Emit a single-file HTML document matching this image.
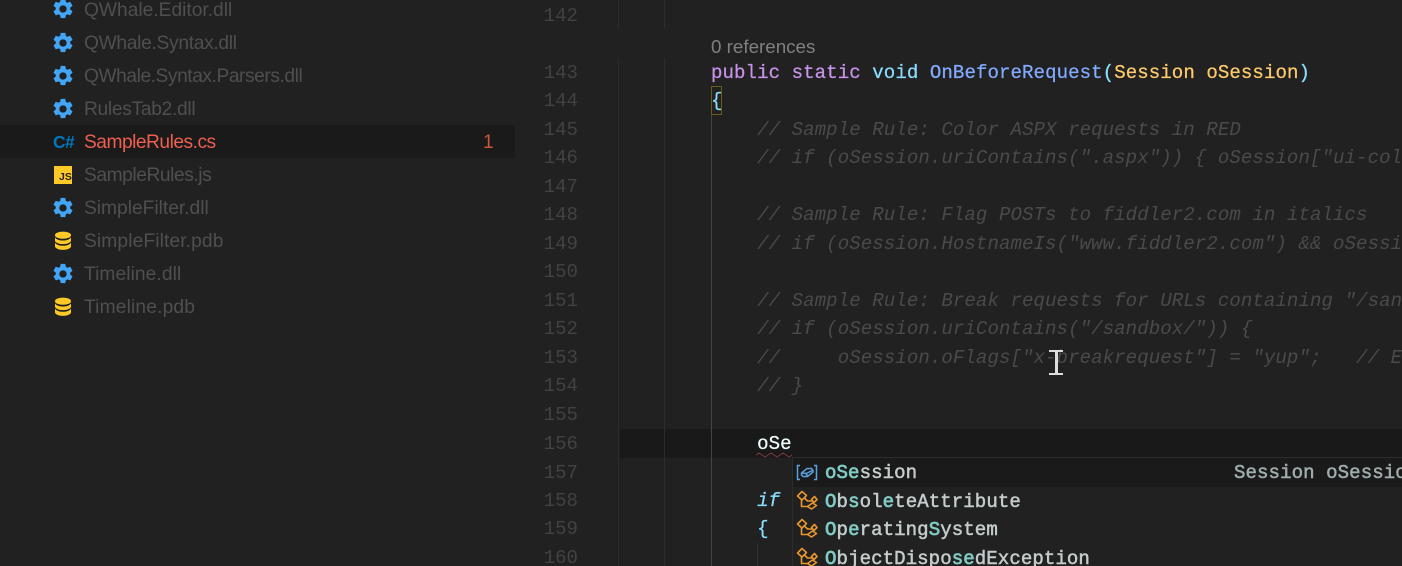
<!DOCTYPE html>
<html>
<head>
<meta charset="utf-8">
<style>
html,body{margin:0;padding:0;background:#212121;}
#r{position:relative;width:1402px;height:566px;overflow:hidden;background:#212121;}
.a{position:absolute;}
.f{position:absolute;left:84px;height:33px;font:19.2px/33px "Liberation Sans",sans-serif;color:#4f4f4f;white-space:pre;}
.ic{position:absolute;}
.n,.c,.s{font-family:"Liberation Mono",monospace;font-size:19.08px;white-space:pre;position:absolute;height:28px;line-height:28px;letter-spacing:.07px;}
.n{left:520px;width:58px;text-align:right;color:#424242;letter-spacing:0;}
.c{left:711px;color:#4a4a4a;font-style:italic;}
.c.b{font-style:normal;-webkit-text-stroke:.25px;}
.s{left:825px;color:#c4cccc;-webkit-text-stroke:.5px;}
.s b{color:#80cbc4;font-weight:normal;-webkit-text-stroke:.7px;}
.g{position:absolute;width:1px;background:#2c2c2c;}
</style>
</head>
<body>
<div id="r">
<svg width="0" height="0" style="position:absolute">
<defs>
<symbol id="gear" viewBox="0 0 24 24"><path fill="#42a5f5" fill-rule="evenodd" d="M9.5 1h5l.6 3.2 1.7 1 3.1-1.1 2.5 4.3-2.5 2.1v2l2.5 2.1-2.5 4.3-3.1-1.1-1.7 1-.6 3.2h-5l-.6-3.2-1.7-1-3.1 1.1-2.5-4.3 2.5-2.1v-2L1.6 8.4l2.5-4.3 3.1 1.1 1.7-1zM12 8a4 4 0 1 0 0 8 4 4 0 0 0 0-8z"/></symbol>
<symbol id="db" viewBox="0 0 20 20"><g fill="#ffca28"><ellipse cx="10" cy="4.2" rx="8" ry="3.6"/><path d="M2 6.2c1 2.3 4.500 3.300 8 3.300s7-1 8-3.300v3.300c0 2-3.600 3.600-8 3.600s-8-1.600-8-3.600z"/><path d="M2 11.500c1 2.300 4.500 3.300 8 3.300s7-1 8-3.300v3.800c0 2-3.600 3.600-8 3.600s-8-1.600-8-3.600z"/></g></symbol>
<symbol id="cls" viewBox="0 0 22 20"><g fill="none" stroke="#e8972e" stroke-width="1.600" stroke-linejoin="round"><path d="M1.500 6 6 1.500 10.500 5.500 6 10z"/><path d="M15.500 9.500 18.500 6.500 21 9.500 18 12.500z"/><path d="M11.500 16.500 16.500 13 20.500 15.500 15.500 19z"/><path d="M8.500 8 11.500 11H16M5.500 10V16.500H12"/></g></symbol>
</defs>
</svg>

<!-- selected row -->
<div class="a" style="left:0;top:125px;width:515px;height:33px;background:#1a1a1a"></div>

<svg class="ic" style="left:52px;top:-2px" width="22" height="22"><use href="#gear"/></svg>
<svg class="ic" style="left:52px;top:32px" width="22" height="22"><use href="#gear"/></svg>
<svg class="ic" style="left:52px;top:65px" width="22" height="22"><use href="#gear"/></svg>
<svg class="ic" style="left:52px;top:98px" width="22" height="22"><use href="#gear"/></svg>
<div class="a" style="left:53px;top:131px;font:bold 17.500px/22px 'Liberation Sans',sans-serif;color:#0277bd;letter-spacing:-.6px">C#</div>
<div class="a" style="left:54px;top:166px;width:18px;height:18px;background:#ffca28"></div>
<div class="a" style="left:59px;top:171px;width:13px;height:13px;font:bold 10.500px/13px 'Liberation Sans',sans-serif;color:#212121;letter-spacing:0">JS</div>
<svg class="ic" style="left:52px;top:197px" width="22" height="22"><use href="#gear"/></svg>
<svg class="ic" style="left:53px;top:231px" width="20" height="20"><use href="#db"/></svg>
<svg class="ic" style="left:52px;top:263px" width="22" height="22"><use href="#gear"/></svg>
<svg class="ic" style="left:53px;top:297px" width="20" height="20"><use href="#db"/></svg>

<div class="f" style="top:-6px">QWhale.Editor.dll</div>
<div class="f" style="top:27px;letter-spacing:-.3px">QWhale.Syntax.dll</div>
<div class="f" style="top:60px;letter-spacing:-.44px">QWhale.Syntax.Parsers.dll</div>
<div class="f" style="top:93px;letter-spacing:-.3px">RulesTab2.dll</div>
<div class="f" style="top:126px;color:#ef5f50;letter-spacing:-.5px">SampleRules.cs</div>
<div class="f" style="top:159px;letter-spacing:-.43px">SampleRules.js</div>
<div class="f" style="top:192px">SimpleFilter.dll</div>
<div class="f" style="top:225px;letter-spacing:.12px">SimpleFilter.pdb</div>
<div class="f" style="top:258px;letter-spacing:.08px">Timeline.dll</div>
<div class="f" style="top:291px;letter-spacing:.16px">Timeline.pdb</div>
<div class="f" style="top:126px;left:483px;color:#c8553d">1</div>

<!-- current line -->
<div class="a" style="left:620px;top:429px;width:782px;height:29px;background:#191919"></div>

<!-- guides -->
<div class="g" style="left:618px;top:0;height:29px"></div>
<div class="g" style="left:664px;top:0;height:29px"></div>
<div class="g" style="left:618px;top:58px;height:508px"></div>
<div class="g" style="left:664px;top:58px;height:508px"></div>
<div class="g" style="left:711px;top:115px;height:451px;background:#444"></div>
<div class="g" style="left:757px;top:543px;height:23px;background:#333"></div>

<!-- line numbers -->
<div class="n" style="top:2px">142</div>
<div class="n" style="top:59px">143</div>
<div class="n" style="top:87px">144</div>
<div class="n" style="top:116px">145</div>
<div class="n" style="top:144px">146</div>
<div class="n" style="top:173px">147</div>
<div class="n" style="top:201px">148</div>
<div class="n" style="top:230px">149</div>
<div class="n" style="top:258px">150</div>
<div class="n" style="top:287px">151</div>
<div class="n" style="top:315px">152</div>
<div class="n" style="top:344px">153</div>
<div class="n" style="top:372px">154</div>
<div class="n" style="top:401px">155</div>
<div class="n" style="top:430px">156</div>
<div class="n" style="top:459px">157</div>
<div class="n" style="top:487px">158</div>
<div class="n" style="top:515px">159</div>
<div class="n" style="top:544px">160</div>

<!-- code -->
<div class="a" style="left:711px;top:36px;font:18.800px/22px 'Liberation Sans',sans-serif;color:#808080;white-space:pre">0 references</div>
<div class="c b" style="top:59px"><span style="color:#c792ea">public static</span> <span style="color:#89ddff">void</span> <span style="color:#82aaff">OnBeforeRequest</span><span style="color:#89ddff">(</span><span style="color:#ffcb6b">Session oSession</span><span style="color:#89ddff">)</span></div>
<div class="a" style="left:711px;top:86px;width:9px;height:27px;border:1px solid #6b5a1a"></div>
<div class="c b" style="top:87px;color:#89ddff">{</div>
<div class="c" style="top:116px">    // Sample Rule: Color ASPX requests in RED</div>
<div class="c" style="top:144px">    // if (oSession.uriContains(".aspx")) { oSession["ui-color"] = "red"; }</div>
<div class="c" style="top:201px">    // Sample Rule: Flag POSTs to fiddler2.com in italics</div>
<div class="c" style="top:230px">    // if (oSession.HostnameIs("www.fiddler2.com") &amp;&amp; oSession.HTTPMethodIs("POST")) {</div>
<div class="c" style="top:287px">    // Sample Rule: Break requests for URLs containing "/sandbox/"</div>
<div class="c" style="top:315px">    // if (oSession.uriContains("/sandbox/")) {</div>
<div class="c" style="top:344px">    //     oSession.oFlags["x-breakrequest"] = "yup";   // Existence of the</div>
<div class="c" style="top:372px">    // }</div>
<div class="c b" style="top:430px;color:#eeffff">    oSe</div>
<svg class="a" style="left:756px;top:452px" width="36" height="6"><path d="M0 3 3 1 6 3 9 5 12 3 15 1 18 3 21 5 24 3 27 1 30 3 33 5 36 3" fill="none" stroke="#7a3b3b" stroke-width="1"/></svg>
<div class="c b" style="top:487px;color:#89ddff;font-style:italic">    if</div>
<div class="c b" style="top:515px;color:#89ddff">    {</div>

<!-- I-beam cursor -->
<div class="a" style="left:1049px;top:350px;width:14px;height:2px;background:#ddd"></div>
<div class="a" style="left:1049px;top:373px;width:14px;height:2px;background:#ddd"></div>
<div class="a" style="left:1055px;top:350px;width:3px;height:25px;background:#ddd"></div>

<!-- suggest widget -->
<div class="a" style="left:792px;top:457px;width:610px;height:109px;background:#212121;border-top:1px solid #2d2d2d;border-left:1px solid #2d2d2d;box-sizing:border-box"></div>
<div class="a" style="left:793px;top:458px;width:609px;height:29px;background:#1a1a1a"></div>
<svg class="a" style="left:796px;top:464px" width="22" height="18" viewBox="0 0 22 18"><g fill="none" stroke="#5c9fe0" stroke-width="1.500"><path d="M4 1.500H1.500V15.500H4M18 1.500h2.500V15.500H18"/><path d="M5.500 9 11 4.500h4.500L17 6.500V8L11.500 12.500H7L5.500 11zM6 9l4 .5 1.500 2.500M10 9.500 16.500 6.500"/></g></svg>
<svg class="a" style="left:796px;top:490px" width="22" height="20"><use href="#cls"/></svg>
<svg class="a" style="left:796px;top:518px" width="22" height="20"><use href="#cls"/></svg>
<svg class="a" style="left:796px;top:547px" width="22" height="20"><use href="#cls"/></svg>
<div class="s" style="top:459px"><b>oSe</b>ssion</div>
<div class="s" style="top:488px"><b>O</b>b<b>s</b>ol<b>e</b>teAttribute</div>
<div class="s" style="top:516px"><b>O</b>p<b>e</b>rating<b>S</b>ystem</div>
<div class="s" style="top:545px"><b>O</b>bjectDispo<b>se</b>dException</div>
<div class="s" style="top:459px;left:1234px;color:#a0adad">Session oSession</div>
</div>
</body>
</html>
